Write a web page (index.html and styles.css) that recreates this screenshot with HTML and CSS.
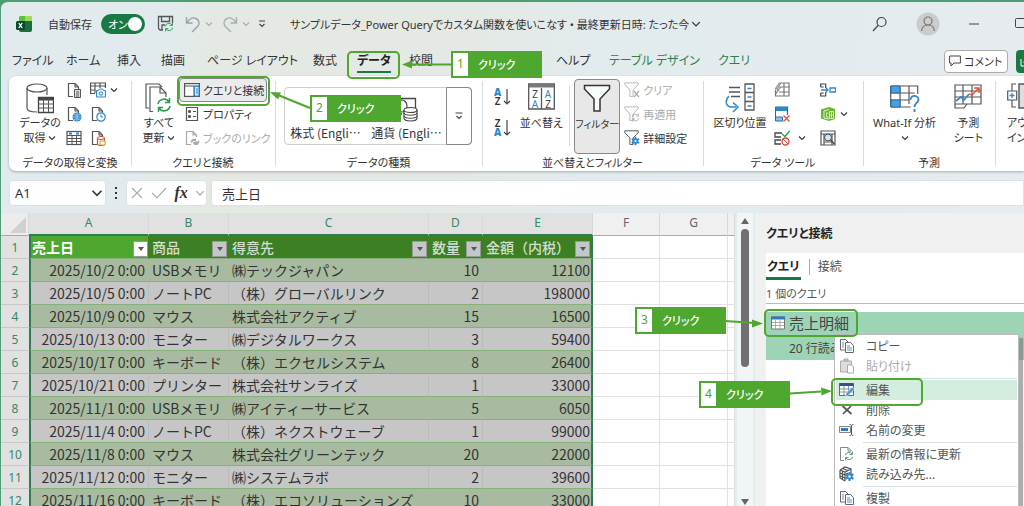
FILE: index.html
```html
<!DOCTYPE html>
<html lang="ja">
<head>
<meta charset="utf-8">
<title>サンプルデータ_Power Queryでカスタム関数を使いこなす</title>
<link rel="stylesheet" href="styles.css">
</head>
<body>
<svg class="defs" aria-hidden="true">
  <defs>
    <symbol id="chev" viewBox="0 0 8 8"><path d="M1 2.500 4 5.500 7 2.500" fill="none" stroke="currentColor" stroke-width="1.100"/></symbol>
    <symbol id="page" viewBox="0 0 16 16"><path d="M7 14.500H2.500v-13H9l3.500 3.500v2M9 1.500V5h3.500" fill="none" stroke="#555" stroke-width="1.200"/></symbol>
    <symbol id="funnel" viewBox="0 0 28 28"><path d="M1.500 1.500h25v3.500L17 15v12h-6V15L1.500 5z" fill="#f8fbfc" stroke="currentColor" stroke-width="1.500"/></symbol>
    <symbol id="copy" viewBox="0 0 16 16"><path d="M1.500 1.500h5l2.500 2.500v8H1.500z" fill="#fff" stroke="#667" /><path d="M6.500 4.500h5L14.500 7.500v7h-8z" fill="#fff" stroke="#667"/><path d="M8 8h3M8 10h5M8 12h5M3 5h2M3 7h2M3 9h2" stroke="#5a94c4"/></symbol>
    <symbol id="refresh" viewBox="0 0 16 16"><path d="M2 7a6 6 0 0 1 11-2M14 9a6 6 0 0 1-11 2M13.500 1v4.500H9M2.500 15v-4.500H7" fill="none" stroke="currentColor" stroke-width="1.500"/></symbol>
    <symbol id="gear" viewBox="0 0 12 12"><path d="M6 1v10M1.700 3.500l8.600 5M1.700 8.500l8.600-5" stroke="#2f88cc" stroke-width="2.200"/><circle cx="6" cy="6" r="3.300" fill="#2f88cc"/><circle cx="6" cy="6" r="1.300" fill="#fff"/></symbol>
  </defs>
</svg>
<div class="window">
  <header class="titlebar">
    <svg class="i16" viewBox="0 0 16 16"><path d="M4 0h10a2 2 0 0 1 2 2v4H3V1z" fill="#5cbf4a"/><path d="M9 0h5a2 2 0 0 1 2 2v3H9z" fill="#a4d85c"/><path d="M3 5h13v9a2 2 0 0 1-2 2H5a2 2 0 0 1-2-2z" fill="#18713c"/><rect y="5" width="9" height="9" rx="1.500" fill="#0c4a2c"/><path d="m2.800 7 3.400 5M6.200 7l-3.400 5" stroke="#fff" stroke-width="1.300"/></svg>
    <span class="autosave" id="autosave">自動保存</span>
    <button class="toggle" aria-labelledby="autosave" aria-pressed="true">オン<i></i></button>
    <button class="icon" aria-label="保存"><svg width="18" height="18" viewBox="0 0 18 18"><path d="M6 15H3L1.500 13.500v-12h14V8M4.500 1.500v5h8v-5M5 15v-5h3" fill="none" stroke="#555" stroke-width="1.300"/><use href="#refresh" x="7" y="7" width="10" height="10" color="#2e9a4f"/></svg></button>
    <button class="icon dim" aria-label="元に戻す"><svg width="16" height="18" viewBox="0 0 16 18"><path d="M1.500 2v6h6M2 7.500C4.500 4 8 2 11 3.500s4 5 2 7.500l-6 6" fill="none" stroke="#9da3a5" stroke-width="1.400"/></svg></button>
    <svg class="i8 faint"><use href="#chev"/></svg>
    <button class="icon dim" aria-label="やり直し"><svg width="16" height="18" viewBox="0 0 16 18"><path d="M14.500 2v6h-6M14 7.500C11.500 4 8 2 5 3.500s-4 5-2 7.500l6 6" fill="none" stroke="#a9afb1" stroke-width="1.400"/></svg></button>
    <svg class="i8 faint"><use href="#chev"/></svg>
    <svg class="i8" viewBox="0 0 8 8"><path d="M1 1h6M1.500 4 4 6.500 6.500 4" fill="none" stroke="#444" stroke-width="1.200"/></svg>
    <h1>サンプルデータ_Power Queryでカスタム関数を使いこなす • 最終更新日時: たった今</h1>
    <svg class="i10"><use href="#chev"/></svg>
    <button class="icon search" aria-label="検索"><svg width="16" height="16" viewBox="0 0 16 16"><circle cx="9.500" cy="6" r="4.500" fill="none" stroke="#444" stroke-width="1.200"/><path d="M6 9.500 1 15" stroke="#444" stroke-width="1.200"/></svg></button>
    <button class="icon avatar" aria-label="アカウント"><svg width="24" height="24" viewBox="0 0 24 24"><circle cx="12" cy="12" r="11.500" fill="#ccc"/><circle cx="12" cy="9" r="4" fill="none" stroke="#777" stroke-width="1.200"/><path d="M5.500 19c.500-4 3-6 6.500-6s6 2 6.500 6" fill="none" stroke="#777" stroke-width="1.200"/></svg></button>
    <button class="icon" aria-label="最小化"><svg width="10" height="10"><path d="M0 5h10" stroke="#444"/></svg></button>
    <button class="icon" aria-label="元のサイズに戻す"><svg width="12" height="12"><rect x=".5" y=".5" width="11" height="9" rx="1" fill="none" stroke="#444"/></svg></button>
  </header>

  <nav class="tabs">
    <a href="#">ファイル</a><a href="#">ホーム</a><a href="#">挿入</a><a href="#">描画</a><a href="#">ページ レイアウト</a><a href="#">数式</a><a href="#" class="active">データ</a><a href="#">校閲</a><a href="#">ヘルプ</a><a href="#" class="green">テーブル デザイン</a><a href="#" class="green">クエリ</a>
    <button class="comment"><svg width="12" height="12" viewBox="0 0 12 12"><path d="M.6 1h10.800v7H5l-3 3V8H.6z" fill="none" stroke="#444"/></svg>コメント</button>
    <button class="share" aria-label="共有"><svg width="12" height="12" viewBox="0 0 12 12"><path d="M1 4v7h9M4 8c0-3 2-4 5-4M7 1l3 3-3 3" fill="none" stroke="#fff"/></svg></button>
  </nav>

  <section class="ribbon">
    <div class="group g1">
      <div class="tools">
        <button class="big"><svg width="28" height="31" viewBox="0 0 28 31"><path d="M1 5v20c0 2.500 4 4 10 4M21 12V5" fill="none" stroke="#555" stroke-width="1.200"/><ellipse cx="11" cy="5" rx="10" ry="4" fill="none" stroke="#555" stroke-width="1.200"/><path d="M12.500 14.500h15v15h-15z" fill="#fff" stroke="#444" stroke-width="1.300"/><path d="M12.500 16h15" stroke="#444" stroke-width="3"/><path d="M12.500 21h15M12.500 25h15M17.500 15v14M22.500 15v14" stroke="#555"/></svg><span>データの<br>取得 <svg class="i8"><use href="#chev"/></svg></span></button>
        <div class="icons two">
          <button class="icon" aria-label="テキストから"><svg class="i16" viewBox="0 0 16 16"><use href="#page"/><path d="M8.500 7.500h6v8h-6zM10 10h3M10 12h3M10 14h3" fill="#ddd" stroke="#555"/></svg></button>
          <button class="icon" aria-label="画像から"><svg class="i16" viewBox="0 0 16 16"><path d="M5 11.500H.6V1h14.800v5M.6 4h14.800M.6 8H5M5 1v10M10 1v5" fill="none" stroke="#555" stroke-width="1.200"/><path d="M6.500 8.500h2l1-1.500h3l1 1.500h2v6.500h-9z" fill="#e5f1fa" stroke="#2f88cc"/><circle cx="11" cy="11.500" r="1.700" fill="none" stroke="#2f88cc"/></svg></button>
          <svg class="i8"><use href="#chev"/></svg>
          <button class="icon" aria-label="Web から"><svg class="i16" viewBox="0 0 16 16"><use href="#page"/><circle cx="11" cy="11" r="4.500" fill="#2f88cc"/><path d="M6.500 11h9M11 6.500v9M8 8.500q3 1.500 6 0M8 13.500q3-1.500 6 0" stroke="#b7daf2" stroke-width=".7" fill="none"/></svg></button>
          <button class="icon" aria-label="最近使ったソース"><svg class="i16" viewBox="0 0 16 16"><use href="#page"/><circle cx="11" cy="11" r="4.200" fill="#fff" stroke="#2f88cc" stroke-width="1.200"/><path d="M11 8.500V11h2" stroke="#2f88cc" fill="none"/></svg></button>
          <i></i>
          <button class="icon" aria-label="テーブルから"><svg class="i16" viewBox="0 0 16 16"><rect x="1" y="1.500" width="14" height="13" fill="#fff" stroke="#555" stroke-width="1.200"/><path d="M1 5.500h14M1 8.500h14M1 11.500h14M6 5v9M10.500 5v9" stroke="#555"/><path d="M3 3.500h3M10 3.500h3" stroke="#2f88cc" stroke-width="2"/></svg></button>
          <button class="icon" aria-label="既存の接続"><svg class="i16" viewBox="0 0 16 16"><use href="#page"/><path d="M7.500 8v6c0 2 7 2 7 0V8" fill="#fff" stroke="#d9472f" stroke-width="1.200"/><ellipse cx="11" cy="8" rx="3.500" ry="1.500" fill="#fff" stroke="#d9472f"/><path d="M10 11h5v4h-5z" fill="#fff" stroke="#d59a20"/></svg></button>
        </div>
      </div>
      <h2>データの取得と変換</h2>
    </div>
    <div class="group g2">
      <div class="tools">
        <button class="big"><svg width="28" height="31" viewBox="0 0 28 31"><path d="M4 25H1V1h13l3 3M8 28.500H5V4h10l6 6v4M15 4v6h6" fill="none" stroke="#555" stroke-width="1.200"/><use href="#refresh" x="11" y="14" width="16" height="16" color="#2e9a4f"/></svg><span>すべて<br>更新 <svg class="i8"><use href="#chev"/></svg></span></button>
        <div class="list">
          <button class="small pressed"><svg class="i16" viewBox="0 0 16 16"><rect x=".6" y="1.600" width="14.800" height="12.800" fill="#fff" stroke="#555" stroke-width="1.200"/><path d="M.6 4h15M10 4v10" stroke="#555"/><path d="M10.500 4.500h4.500v9.500h-4.500z" fill="#d3e8f8" stroke="#2f88cc"/><path d="M12 7h2M12 9h2M12 11h2" stroke="#2f88cc"/></svg>クエリと接続</button>
          <button class="small"><svg class="i16" viewBox="0 0 16 16"><path d="M2.500 1.500h11v13h-11z" fill="#fff" stroke="#555" stroke-width="1.200"/><path d="M4.500 4.500h2v2h-2zM4.500 9.500h2v2h-2z" fill="#555" stroke="#555" stroke-width=".8"/><path d="M9 5.500h3M9 10.500h3" stroke="#555"/></svg>プロパティ</button>
          <button class="small" disabled><svg class="i16" viewBox="0 0 16 16" opacity=".5"><use href="#page"/><path d="m7 12 2-2h3M15 11l-2 3h-3M9 13l4-1" fill="none" stroke="#555" stroke-width="1.800"/></svg>ブックのリンク</button>
        </div>
      </div>
      <h2>クエリと接続</h2>
    </div>
    <div class="group g3">
      <div class="gallery">
        <button class="kind">株式 (Engli…</button>
        <button class="kind"><svg width="24" height="26" viewBox="0 0 24 26"><path d="M0 1.500h20.500V11M0 17h7" fill="none" stroke="#444" stroke-width="1.300"/><ellipse cx="7" cy="9" rx="5" ry="6" fill="none" stroke="#444" stroke-width="1.200"/><path d="M9 13v8c0 4 13 4 13 0v-8" fill="#fff" stroke="#444" stroke-width="1.200"/><ellipse cx="15.500" cy="13" rx="6.500" ry="2.500" fill="#fff" stroke="#444" stroke-width="1.200"/><path d="M9 16c0 3 13 3 13 0M9 19c0 3 13 3 13 0" fill="none" stroke="#444"/></svg>通貨 (Engli…</button>
        <button class="more" aria-label="その他"><svg class="i8" viewBox="0 0 8 8"><path d="M.5 1h7M1.500 4 4 6.500 6.500 4" fill="none" stroke="#444" stroke-width="1.200"/></svg></button>
      </div>
      <h2>データの種類</h2>
    </div>
    <div class="group g4">
      <div class="tools">
        <div class="sorts">
          <button class="icon sort" aria-label="昇順"><span><b>A</b><br>Z</span><svg width="8" height="18"><path d="M4 1v15M1 13l3 3 3-3" fill="none" stroke="#444" stroke-width="1.200"/></svg></button>
          <button class="icon sort" aria-label="降順"><span>Z<br><b>A</b></span><svg width="8" height="18"><path d="M4 1v15M1 13l3 3 3-3" fill="none" stroke="#444" stroke-width="1.200"/></svg></button>
        </div>
        <button class="big sortdlg"><svg width="27" height="28" viewBox="0 0 27 28"><path d="M.7 1h25.600v25H.7zM13.500 5v21" fill="#fff" stroke="#555" stroke-width="1.300"/><path d="M1 3h25" stroke="#777" stroke-width="3"/><g font-family="Noto Sans" font-size="10" text-anchor="middle" fill="#444"><text x="7" y="15">Z</text><text x="20" y="15" fill="#2f88cc">A</text><text x="7" y="25" fill="#2f88cc">A</text><text x="20" y="25">Z</text></g></svg><span>並べ替え</span></button>
        <i class="rule"></i>
        <button class="big filter"><svg width="28" height="28"><use href="#funnel"/></svg><span>フィルター</span></button>
        <div class="list">
          <button class="small" disabled><svg class="i16" viewBox="0 0 16 16"><use href="#funnel" width="15" height="15"/><path d="m10 9 5 6M15 9l-5 6" stroke="#aaa" stroke-width="1.200"/></svg>クリア</button>
          <button class="small" disabled><svg class="i16" viewBox="0 0 16 16"><use href="#funnel" width="15" height="15"/><use href="#refresh" x="7" y="7" width="9" height="9"/></svg>再適用</button>
          <button class="small"><svg class="i16" viewBox="0 0 16 16"><use href="#funnel" width="15" height="15"/><use href="#gear" x="6.500" y="6" width="10" height="10"/></svg>詳細設定</button>
        </div>
      </div>
      <h2>並べ替えとフィルター</h2>
    </div>
    <div class="group g5">
      <div class="tools">
        <button class="big"><svg width="30" height="30" viewBox="0 0 30 30"><path d="M4 4.500h11M4 9h11M6 13.500h9" stroke="#555" stroke-width="1.300"/><path d="M4 13c-4 4-4 10 2 11h5M8 19.500l5 4.500-5 5" fill="none" stroke="#2f88cc" stroke-width="1.500"/><path d="M20 1h9v26h-9zM20 9.500h9M20 18.500h9" fill="none" stroke="#555" stroke-width="1.300"/><path d="M22.500 5.500h4M22.500 14h4M22.500 23h4" stroke="#2f88cc" stroke-width="1.500"/></svg><span>区切り位置</span></button>
        <div class="icons four">
          <button class="icon" aria-label="フラッシュ フィル"><svg class="i16" viewBox="0 0 16 16"><path d="M7 1h8v13H1.500V8M7 5h8M5 10h10M10 1v13" fill="none" stroke="#777" stroke-width="1.200"/><path d="M5 1 1 7h3l-2 5 5-7H4.500L7 1z" fill="#bbb" stroke="#777" stroke-width=".7"/></svg></button><i></i>
          <button class="icon" aria-label="統合"><svg class="i16" viewBox="0 0 16 16"><path d="M.7 5V2h5v4M.7 11v3h5v-4M.7 5h3M.7 11h3" fill="none" stroke="#444" stroke-width="1.200"/><path d="M1 8h7M6 6l2 2-2 2M10 6h5.500v4H10z" fill="none" stroke="#2f88cc" stroke-width="1.300"/></svg></button><i></i>
          <button class="icon" aria-label="重複の削除"><svg class="i16" viewBox="0 0 16 16"><path d="M1.500 1h12v8" fill="none" stroke="#246fa8" stroke-width="1.200"/><path d="M2 1h11v4H2z" fill="#2f88cc"/><path d="M1.500 1v14h7v-4h-7" fill="#8ec4e9" stroke="#246fa8"/><path d="m9.500 9.500 6 6M15.500 9.500l-6 6" stroke="#e5533d" stroke-width="1.400"/></svg></button><i></i>
          <button class="icon" aria-label="リレーションシップ"><svg class="i16" viewBox="0 0 16 16"><path d="m1 3.500 8-2.500 6 2v10l-6 2-8-2.500z" fill="#6bb52d"/><path d="M9 3.500 4 5v7l5 1" stroke="#e3f5cf" fill="none"/><path d="M6.500 7h3v4h-3zM9.500 5.500h4v7h-4zM9.500 9h4M11.500 5.500v7" stroke="#e3f5cf" fill="none" stroke-width=".8"/></svg></button><svg class="i8"><use href="#chev"/></svg>
          <button class="icon" aria-label="データの入力規則"><svg class="i16" viewBox="0 0 16 16"><path d="M8 3H1v4h6M7 10H1v4h6" fill="none" stroke="#444" stroke-width="1.300"/><path d="m8 4 3 2.500L15.500 1" stroke="#2e9a4f" stroke-width="1.300" fill="none"/><circle cx="11.500" cy="11.500" r="3.500" fill="#fff" stroke="#e5402d" stroke-width="1.300"/><path d="m9 9 5 5" stroke="#e5402d"/></svg></button><svg class="i8"><use href="#chev"/></svg>
          <button class="icon" aria-label="データ モデルの管理"><svg class="i16" viewBox="0 0 16 16"><path d="M1 1h14v14H1zM1 4h14M4 4v11M12 4v11M4 12h8" fill="none" stroke="#555" stroke-width="1.200"/><circle cx="8" cy="7.500" r="3.500" fill="#cfe6f7" stroke="#444"/><path d="m10.500 10 4 4" stroke="#444" stroke-width="1.500"/></svg></button>
        </div>
      </div>
      <h2>データ ツール</h2>
    </div>
    <div class="group g6">
      <div class="tools">
        <button class="big"><svg width="30" height="30" viewBox="0 0 30 30"><path d="M.7 3h27v8M.7 10h24M.7 17h18M.7 24h20M10 3v21M19 3v18M.7 3v21" fill="none" stroke="#555" stroke-width="1.200"/><path d="M1 3h9v7H1zM1 17h9v7H1z" fill="#4b9fdc" stroke="#246fa8"/><path d="M20.500 17c0-6 8.500-5 8 0-.500 3-4 3-4 7M24.500 26v3" fill="none" stroke="#2f88cc" stroke-width="1.800"/></svg><span>What-If 分析<br><svg class="i8"><use href="#chev"/></svg></span></button>
        <button class="big"><svg width="28" height="28" viewBox="0 0 28 28"><path d="M1 2h26v19H13l-3 4H1zM1 8h26M1 14h26M9 2v19M18 2v19M1 21h12" fill="none" stroke="#555" stroke-width="1.200"/><path d="m2 18 5-4 3 3 5-6" fill="none" stroke="#2f88cc" stroke-width="1.700"/><path d="m15 11 3 1 7-7M20 5h5v5" fill="none" stroke="#e5533d" stroke-width="1.500"/></svg><span>予測<br>シート</span></button>
      </div>
      <h2>予測</h2>
    </div>
    <div class="group g7">
      <button class="big"><svg width="30" height="28" viewBox="0 0 30 28"><path d="M9 1H5v7M5 17v7h4M.7 8h9v9h-9z" fill="none" stroke="#555" stroke-width="1.200"/><path d="M2.500 12.500h5M5 10v5" stroke="#2f88cc" stroke-width="1.300"/><path d="M12 1h17v24H12z" fill="#ddd" stroke="#555" stroke-width="1.400"/></svg><span>アウト<br>イン</span></button>
    </div>
  </section>

  <div class="formulabar">
    <div class="namebox"><input aria-label="名前ボックス" value="A1"><svg class="i12"><use href="#chev"/></svg></div>
    <svg class="dots" width="4" height="14" viewBox="0 0 4 14"><path d="M1 1h2v2H1zM1 6h2v2H1zM1 11h2v2H1z" fill="#333"/></svg>
    <div class="fx">
      <button class="icon" aria-label="キャンセル"><svg width="14" height="14"><path d="m2 2 10 10M12 2 2 12" stroke="#aaa" stroke-width="1.200"/></svg></button>
      <button class="icon" aria-label="入力"><svg width="16" height="14"><path d="m1 7 5 5L15 2" fill="none" stroke="#aaa" stroke-width="1.200"/></svg></button>
      <button class="icon fn" aria-label="関数の挿入">fx</button>
      <svg class="i10 faint"><use href="#chev"/></svg>
    </div>
    <input class="formula" aria-label="数式バー" value="売上日">
  </div>

  <main class="work">
    <div class="sheet">
      <table>
        <colgroup><col class="c0"><col class="cA"><col class="cB"><col class="cC"><col class="cD"><col class="cE"><col class="cF"><col class="cG"><col></colgroup>
        <thead><tr><th class="corner"><svg width="16" height="16"><path d="M16 0v16H0z" fill="#d0d0d0"/></svg></th><th class="s">A</th><th class="s">B</th><th class="s">C</th><th class="s">D</th><th class="s">E</th><th>F</th><th>G</th><th></th></tr></thead>
        <tbody>
        <tr class="head"><th>1</th><td class="cur"><div>売上日<button aria-label="売上日で絞り込む"></button></div></td><td><div>商品<button aria-label="商品で絞り込む"></button></div></td><td><div>得意先<button aria-label="得意先で絞り込む"></button></div></td><td><div>数量<button aria-label="数量で絞り込む"></button></div></td><td><div>金額（内税）<button aria-label="金額で絞り込む"></button></div></td><td></td><td></td><td></td></tr>
        <tr><th>2</th><td>2025/10/2 0:00</td><td>USBメモリ</td><td>㈱テックジャパン</td><td>10</td><td>12100</td><td></td><td></td><td></td></tr>
        <tr><th>3</th><td>2025/10/5 0:00</td><td>ノートPC</td><td>（株）グローバルリンク</td><td>2</td><td>198000</td><td></td><td></td><td></td></tr>
        <tr><th>4</th><td>2025/10/9 0:00</td><td>マウス</td><td>株式会社アクティブ</td><td>15</td><td>16500</td><td></td><td></td><td></td></tr>
        <tr><th>5</th><td>2025/10/13 0:00</td><td>モニター</td><td>㈱デジタルワークス</td><td>3</td><td>59400</td><td></td><td></td><td></td></tr>
        <tr><th>6</th><td>2025/10/17 0:00</td><td>キーボード</td><td>（株）エクセルシステム</td><td>8</td><td>26400</td><td></td><td></td><td></td></tr>
        <tr><th>7</th><td>2025/10/21 0:00</td><td>プリンター</td><td>株式会社サンライズ</td><td>1</td><td>33000</td><td></td><td></td><td></td></tr>
        <tr><th>8</th><td>2025/11/1 0:00</td><td>USBメモリ</td><td>㈱アイティーサービス</td><td>5</td><td>6050</td><td></td><td></td><td></td></tr>
        <tr><th>9</th><td>2025/11/4 0:00</td><td>ノートPC</td><td>（株）ネクストウェーブ</td><td>1</td><td>99000</td><td></td><td></td><td></td></tr>
        <tr><th>10</th><td>2025/11/8 0:00</td><td>マウス</td><td>株式会社グリーンテック</td><td>20</td><td>22000</td><td></td><td></td><td></td></tr>
        <tr><th>11</th><td>2025/11/12 0:00</td><td>モニター</td><td>㈱システムラボ</td><td>2</td><td>39600</td><td></td><td></td><td></td></tr>
        <tr><th>12</th><td>2025/11/16 0:00</td><td>キーボード</td><td>（株）エコソリューションズ</td><td>10</td><td>33000</td><td></td><td></td><td></td></tr>
        </tbody>
      </table>
    </div>
    <div class="scroll">
      <svg width="10" height="8"><path d="M1 7h8L5 1z" fill="#666"/></svg>
      <div class="thumb"></div>
      <svg class="down" width="10" height="8"><path d="M1 1h8L5 7z" fill="#666"/></svg>
    </div>
    <aside class="pane">
      <h3>クエリと接続</h3>
      <div class="panebody">
        <div class="panetabs"><a href="#" class="on">クエリ</a><a href="#">接続</a></div>
        <p class="count">1 個のクエリ</p>
        <div class="query">
          <svg width="14" height="14" viewBox="0 0 14 14"><path d="M.5 1h13v12H.5z" fill="#fff" stroke="#777"/><path d="M0 2h14" stroke="#2f78c0" stroke-width="3"/><path d="M1 6.500h12M1 9.500h12M4.500 4v9M9 4v9" stroke="#999" stroke-width=".8"/></svg>
          <strong>売上明細</strong>
          <span>20 行読み</span>
        </div>
      </div>
    </aside>
  </main>

  <div class="menu" role="menu">
    <button role="menuitem"><svg class="i16"><use href="#copy"/></svg>コピー</button>
    <button role="menuitem" disabled><svg class="i16" viewBox="0 0 16 16"><path d="M1.500 3h11v11h-11z" fill="#ddd" stroke="#aaa"/><path d="M5 3V1h4v2z" fill="#ccc" stroke="#aaa"/><path d="M8.500 7h4l2 2v6h-6z" fill="#fff" stroke="#aaa"/></svg>貼り付け</button>
    <hr>
    <button role="menuitem" class="hot"><svg class="i16" viewBox="0 0 16 16"><path d="M.5 1.500h14v12H.5z" fill="#fff" stroke="#667"/><path d="M.5 2.500h14" stroke="#35508c" stroke-width="3"/><path d="M1 7h13M1 10h13M5 4v9M9.500 4v9" stroke="#8996a4"/><path d="m6 15 1.500-4L13.500 5l2 2-6 6z" fill="#3f97d6" stroke="#e6f4fd" stroke-width=".6"/></svg>編集</button>
    <button role="menuitem"><svg class="i16" viewBox="0 0 16 16"><path d="m3.500 4 9 8M12 4l-8 8" stroke="#555" stroke-width="1.700"/></svg>削除</button>
    <button role="menuitem"><svg class="i16" viewBox="0 0 16 16"><path d="M.5 4.500h11v6H.5z" fill="#fff" stroke="#888"/><path d="M2 6h7v3H2z" fill="#2f78c0"/><path d="M10.500 2.500c1.500 0 2 .500 2 1.500v8c0 1-.500 1.500-2 1.500M14.500 2.500c-1.500 0-2 .500-2 1.500v8c0 1 .500 1.500 2 1.500" fill="none" stroke="#555"/></svg>名前の変更</button>
    <hr>
    <button role="menuitem"><svg class="i16" viewBox="0 0 16 16"><path d="M5 14.500H1.500v-13H9l3.500 3.500M9 1.500V5h3.500" fill="none" stroke="#888"/><use href="#refresh" x="5" y="5" width="10" height="10" color="#4d9468"/></svg>最新の情報に更新</button>
    <button role="menuitem"><svg class="i16" viewBox="0 0 16 16"><path d="m1 4 5-3 6 2v5M1 4v8l5 3M1 4l5 2 6-3M6 6v9M1 7l5 2 3-2M1 10l5 2M3.500 2.500l5.500 2M3.500 5v8" fill="none" stroke="#555" stroke-width="1.200"/><use href="#gear" x="5" y="5" width="11" height="11"/></svg>読み込み先...</button>
    <hr>
    <button role="menuitem"><svg class="i16"><use href="#copy"/></svg>複製</button>
  </div>

  <svg class="arrows" width="1024" height="506" fill="#4ea72e" stroke="#4ea72e"><path d="M451 64.500h-40M310 108l-32-13M725 321l30 2M790 393.500l31-2" stroke-width="2"/><path d="m402 64.500 10-4v8zM270 92l11 .5-3 7zM763 323.500l-11-4v8zM832 391l-11-3.500.5 8z" stroke="none"/></svg>
  <i class="ring r1"></i><i class="ring r2"></i><i class="ring r3"></i><i class="ring r4"></i>
  <div class="callout k1"><b>1</b>クリック</div>
  <div class="callout k2"><b>2</b>クリック</div>
  <div class="callout k3"><b>3</b>クリック</div>
  <div class="callout k4"><b>4</b>クリック</div>
</div>
</body>
</html>
```
FILE: styles.css
```css
* { box-sizing: border-box; }
body {
  margin: 0;
  background: #4f9d73;
  color: #333;
  font: 12px/15px "Noto Sans", "Noto Sans CJK JP", sans-serif;
  font-feature-settings: "palt";
}
button, input { font: inherit; color: inherit; font-feature-settings: inherit; border: 0; background: none; padding: 0; margin: 0; }
a { color: inherit; text-decoration: none; }
h1, h2, h3, p { margin: 0; font-weight: 400; }
svg { flex: none; display: block; }
.defs { position: absolute; width: 0; height: 0; }
.i8 { width: 8px; height: 8px; }
.i10 { width: 10px; height: 10px; }
.i12 { width: 12px; height: 12px; }
.i16 { width: 16px; height: 16px; }
.faint { color: #aaa; }
.icon { display: flex; align-items: center; justify-content: center; }

.window {
  position: relative;
  display: flex;
  flex-direction: column;
  height: 100vh;
  overflow: hidden;
  border: solid #4f9d73;
  border-width: 2px 0 0 1px;
  border-radius: 8px 0 0 0;
  background: linear-gradient(100deg, #e1ebef 0, #e1ebee 15%, #e4e9e4 19%, #e4e9e5 44%, #e2ebee 54%, #e6ecef 100%);
}

/* title bar */
.titlebar {
  display: grid;
  grid-template-columns: 32px 53px 56px 28px 20px 17px 20px 16px 32px 401px 1fr 44px 53px 46px 9px;
  align-items: center;
  justify-items: start;
  height: 44px;
  padding-left: 15px;
  flex: none;
}
.titlebar h1 { font-size: 11px; white-space: nowrap; }
.autosave { font-size: 11px; }
.toggle {
  display: flex;
  align-items: center;
  justify-content: space-between;
  width: 44px;
  height: 20px;
  padding: 0 3px 0 7px;
  border-radius: 10px;
  background: #187a43;
  color: #fff;
  font-size: 11px;
}
.toggle i { width: 14px; height: 14px; border-radius: 50%; background: #fff; }

/* tabs */
.tabs {
  display: grid;
  grid-template-columns: 54px 51px 44px 46px 106px 44px 52px 147px 53px 109px 1fr 72px 8px;
  align-items: center;
  height: 30px;
  padding-left: 11px;
  font-size: 12px;
  white-space: nowrap;
  flex: none;
}
.tabs a { justify-self: start; padding: 3px 0; border-bottom: 2px solid transparent; }
.tabs .active { font-weight: 700; color: #222; border-color: #187a43; }
.tabs .green { color: #27824d; }
.comment {
  display: flex;
  align-items: center;
  gap: 3px;
  width: 64px;
  height: 23px;
  padding-left: 4px;
  border: 1px solid #aaa;
  border-radius: 4px;
  background: #fff;
  font-size: 11px;
}
.share { width: 24px; height: 23px; padding-left: 4px; border-radius: 4px; background: #187a43; }

/* ribbon */
.ribbon {
  display: flex;
  height: 95px;
  margin-left: 8px;
  border-radius: 7px 0 0 7px;
  background: #fff;
  box-shadow: 0 1px 3px #0004;
  overflow: hidden;
  flex: none;
  white-space: nowrap;
}
.group { position: relative; display: flex; flex-direction: column; flex: none; }
.group + .group::before { content: ""; position: absolute; left: 0; top: 5px; bottom: 5px; border-left: 1px solid #d5dcdc; }
.g1 { width: 122px; }
.g2 { width: 144px; }
.g3 { width: 207px; }
.g4 { width: 221px; }
.g5 { width: 160px; }
.g6 { width: 132px; }
.g7 { flex: 1; min-width: 0; padding-left: 12px; align-items: flex-start; }
.group h2 { height: 18px; font-size: 11px; line-height: 19px; text-align: center; }
.tools { display: flex; height: 77px; }
.big { display: flex; flex-direction: column; align-items: center; padding-top: 7px; font-size: 11px; flex: none; }
.big > svg { margin-bottom: auto; }
.big > span { height: 38px; }
.big span svg { display: inline-block; }
.g7 .big { height: 77px; align-items: flex-start; text-align: left; }
.small:disabled, .menu button:disabled { color: #aaa; }
.g1 .big { width: 40px; margin-left: 11px; }
.icons { display: grid; grid-auto-rows: 24px; align-content: start; align-items: center; padding-top: 2px; }
.two { grid-template-columns: 24px 20px 10px; margin-left: 6px; }
.two .icon, .four .icon { justify-content: start; }
.g2 .big { width: 38px; margin-left: 9px; }
.list { display: flex; flex-direction: column; padding-top: 2px; }
.small { display: flex; align-items: center; gap: 3px; height: 24px; padding: 0 4px; font-size: 11px; border: 1px solid transparent; border-radius: 4px; }
.g2 .list { width: 88px; margin-left: 1px; }
.pressed { background: #ebebeb; border-color: #888; }
.gallery {
  display: flex;
  height: 58px;
  margin: 11px 10px 8px 9px;
  border: 1px solid #ccc;
  border-radius: 4px;
}
.kind {
  display: flex;
  flex-direction: column;
  align-items: center;
  justify-content: flex-end;
  gap: 2px;
  width: 81px;
  padding-bottom: 4px;
  font: 12px/15px "Noto Sans CJK JP", sans-serif;
  font-feature-settings: normal;
}
.more { display: flex; align-items: center; justify-content: center; flex: 1; margin: -1px; border: 1px solid #888; border-radius: 0 4px 4px 0; }
.sorts { display: flex; flex-direction: column; gap: 13px; padding: 12px 0 0 12px; }
.sort { gap: 2px; font-size: 10px; line-height: 9px; font-weight: 600; }
.sort b { color: #2f88cc; }
.sortdlg { width: 50px; margin-left: 5px; }
.rule { width: 1px; height: 60px; margin: 10px 4px 0 3px; background: #d5dcdc; }
.filter { width: 46px; height: 75px; margin-top: 3px; padding-top: 4px; border: 1px solid #888; border-radius: 4px; background: #e8e8e8; font-size: 10px; }
.filter > span { height: 36px; }
.g4 .small { padding: 0 3px; }
.g5 .big { width: 58px; margin-left: 8px; }
.four { grid-template-columns: 24px 22px 20px 10px; margin-left: 5px; }
.g6 .tools { justify-content: space-between; padding: 0 12px 0 10px; }
.g6 .big span { text-align: center; }

/* formula bar */
.formulabar { display: flex; align-items: center; height: 26px; margin: 9px 0 7px 8px; flex: none; font-size: 13px; }
.namebox, .fx, .formula { height: 26px; border-radius: 4px; background: #fff; border: 1px solid #dde3e4; }
.namebox { display: flex; align-items: center; width: 97px; padding: 0 2px 0 5px; }
.namebox input { flex: 1; width: 0; }
.dots { margin: 0 8px; }
.fx { display: flex; align-items: center; justify-content: space-between; width: 81px; padding: 0 1px 0 3px; }
.fn { font: italic 700 16px/20px "Liberation Serif", serif; }
.formula { flex: 1; min-width: 0; margin-left: 4px; padding-left: 10px; border-radius: 4px 0 0 4px; }

/* worksheet */
.work { display: flex; flex: 1; min-height: 0; }
.sheet { flex: 1; min-width: 0; overflow: hidden; background: #fff; }
table { width: 100%; border-collapse: separate; border-spacing: 0; table-layout: fixed; }
.c0 { width: 28px; } .cA { width: 120px; } .cB { width: 80px; } .cC { width: 200px; }
.cD { width: 54px; } .cE { width: 110px; } .cF { width: 67px; } .cG { width: 68px; }
th { padding: 0; font-weight: 400; font-size: 12px; color: #3b8561; background: #e1e1e1; }
thead th { height: 23px; padding-bottom: 4px; color: #666; background: #f0f0f0; border-right: 1px solid #d8d8d8; border-bottom: 1px solid #aaa; }
thead .s { padding-bottom: 3px; color: #3b8561; background: #e1e1e1; border-bottom: 2px solid #2d7d50; }
thead .corner { padding: 0 3px 2px 9px; background: #ececec; vertical-align: bottom; }
tbody th { border-bottom: 1px solid #c8c8c8; }
td {
  height: 23px;
  padding: 0 3px;
  border-right: 1px solid #e1e1e1;
  border-bottom: 1px solid #e1e1e1;
  font: 14px/20px "Noto Sans CJK JP", sans-serif;
  font-feature-settings: normal;
  white-space: nowrap;
  overflow: hidden;
}
td:nth-child(-n+6) { background: #c6c6c6; border-right-color: #b9bdb9; border-bottom-color: #84b278; }
tr:nth-child(even) td:nth-child(-n+6) { background: #a8bba0; border-right-color: #a8bba0; }
td:nth-child(2), td:nth-child(5), td:nth-child(6) { text-align: right; }
tbody td:nth-child(2) { border-left: 2px solid #2d7d50; }
tbody td:nth-child(-n+6):nth-child(6) { border-right: 2px solid #2d7d50; padding-right: 1px; }
.head td:nth-child(-n+6) { padding: 0 1px 0 3px; background: #3c8023; border-right-color: #3c8023; color: #d4dfcf; font-weight: 500; }
.head td.cur:nth-child(-n+6) { background: #4ea72e; color: #fff; font-weight: 700; padding: 0 0 0 1px; }
.head div { display: flex; justify-content: space-between; align-items: center; }
.head button { width: 15px; height: 16px; margin-top: 3px; border: 1px solid #999; background: #c3c7c9; flex: none; display: grid; place-items: center; }
.head button::after { content: ""; border: 3px solid transparent; border-top: 4px solid #555; border-bottom: 0; }
.head .cur button { background: #fff; }

.scroll { display: flex; flex-direction: column; align-items: center; width: 20px; padding: 4px 0 0; background: #f1f5f5; border: solid #e1ecee; border-width: 0 2px; flex: none; }
.thumb { width: 8px; height: 138px; margin-top: 4px; border-radius: 4px; background: #707070; }
.down { margin-top: auto; }

/* queries pane */
.pane { width: 269px; padding-left: 11px; background: #f0f0f0; flex: none; display: flex; flex-direction: column; }
.pane h3 { padding: 13px 0 12px; font-size: 12px; font-weight: 700; color: #222; }
.panebody { flex: 1; background: #fff; font-size: 12px; }
.panetabs { display: flex; padding-top: 6px; }
.panetabs a { padding-left: 8px; color: #555; font-size: 12px; }
.panetabs .on { padding: 0 1px 3px; margin-right: 8px; border-bottom: 3px solid #187a43; color: #222; font-weight: 700; }
.panetabs a + a { height: 16px; border-left: 1px solid #aaa; }
.count { padding: 6px 0 2px; border-bottom: 1px solid #bbb; color: #555; font-size: 11px; }
.query { display: grid; grid-template-columns: 18px 1fr; align-items: center; row-gap: 3px; height: 48px; margin-top: 8px; padding: 0 5px; background: #9ed4b6; color: #444; }
.query strong { font-size: 15px; font-weight: 400; }
.query span { grid-column: 2; font-size: 12px; }

/* context menu */
.menu {
  position: absolute;
  left: 833px;
  top: 332px;
  width: 185px;
  padding: 1px;
  border: 1px solid #bbb;
  background: #fff;
  box-shadow: 4px 4px 1px #7779;
  color: #555;
}
.menu button { display: flex; align-items: center; gap: 11px; width: 100%; height: 20px; padding-left: 3px; font-size: 12px; }
.menu hr { height: 1px; margin: 2px 0 1px 27px; border: 0; background: #d5dfe5; }
.menu .hot { background: #d3eede; }

/* step annotations */
.arrows { position: absolute; left: -1px; top: -2px; pointer-events: none; }
.ring { position: absolute; border: 2px solid #4ea72e; border-radius: 5px; pointer-events: none; }
.r1 { left: 346px; top: 49px; width: 53px; height: 28px; }
.r2 { left: 176px; top: 74px; width: 93px; height: 30px; }
.r3 { left: 763px; top: 307px; width: 94px; height: 28px; }
.r4 { left: 830px; top: 376px; width: 92px; height: 28px; }
.callout { position: absolute; display: flex; align-items: center; gap: 10px; width: 91px; height: 27px; padding: 2px; background: #4ea72e; color: #fff; font-size: 11px; font-weight: 500; }
.callout b { width: 15px; height: 23px; background: #fff; color: #4ea72e; font-size: 12px; font-weight: 400; line-height: 22px; text-align: center; }
.k1 { left: 450px; top: 49px; }
.k2 { left: 309px; top: 93px; }
.k3 { left: 634px; top: 305px; }
.k4 { left: 698px; top: 379px; }
```
